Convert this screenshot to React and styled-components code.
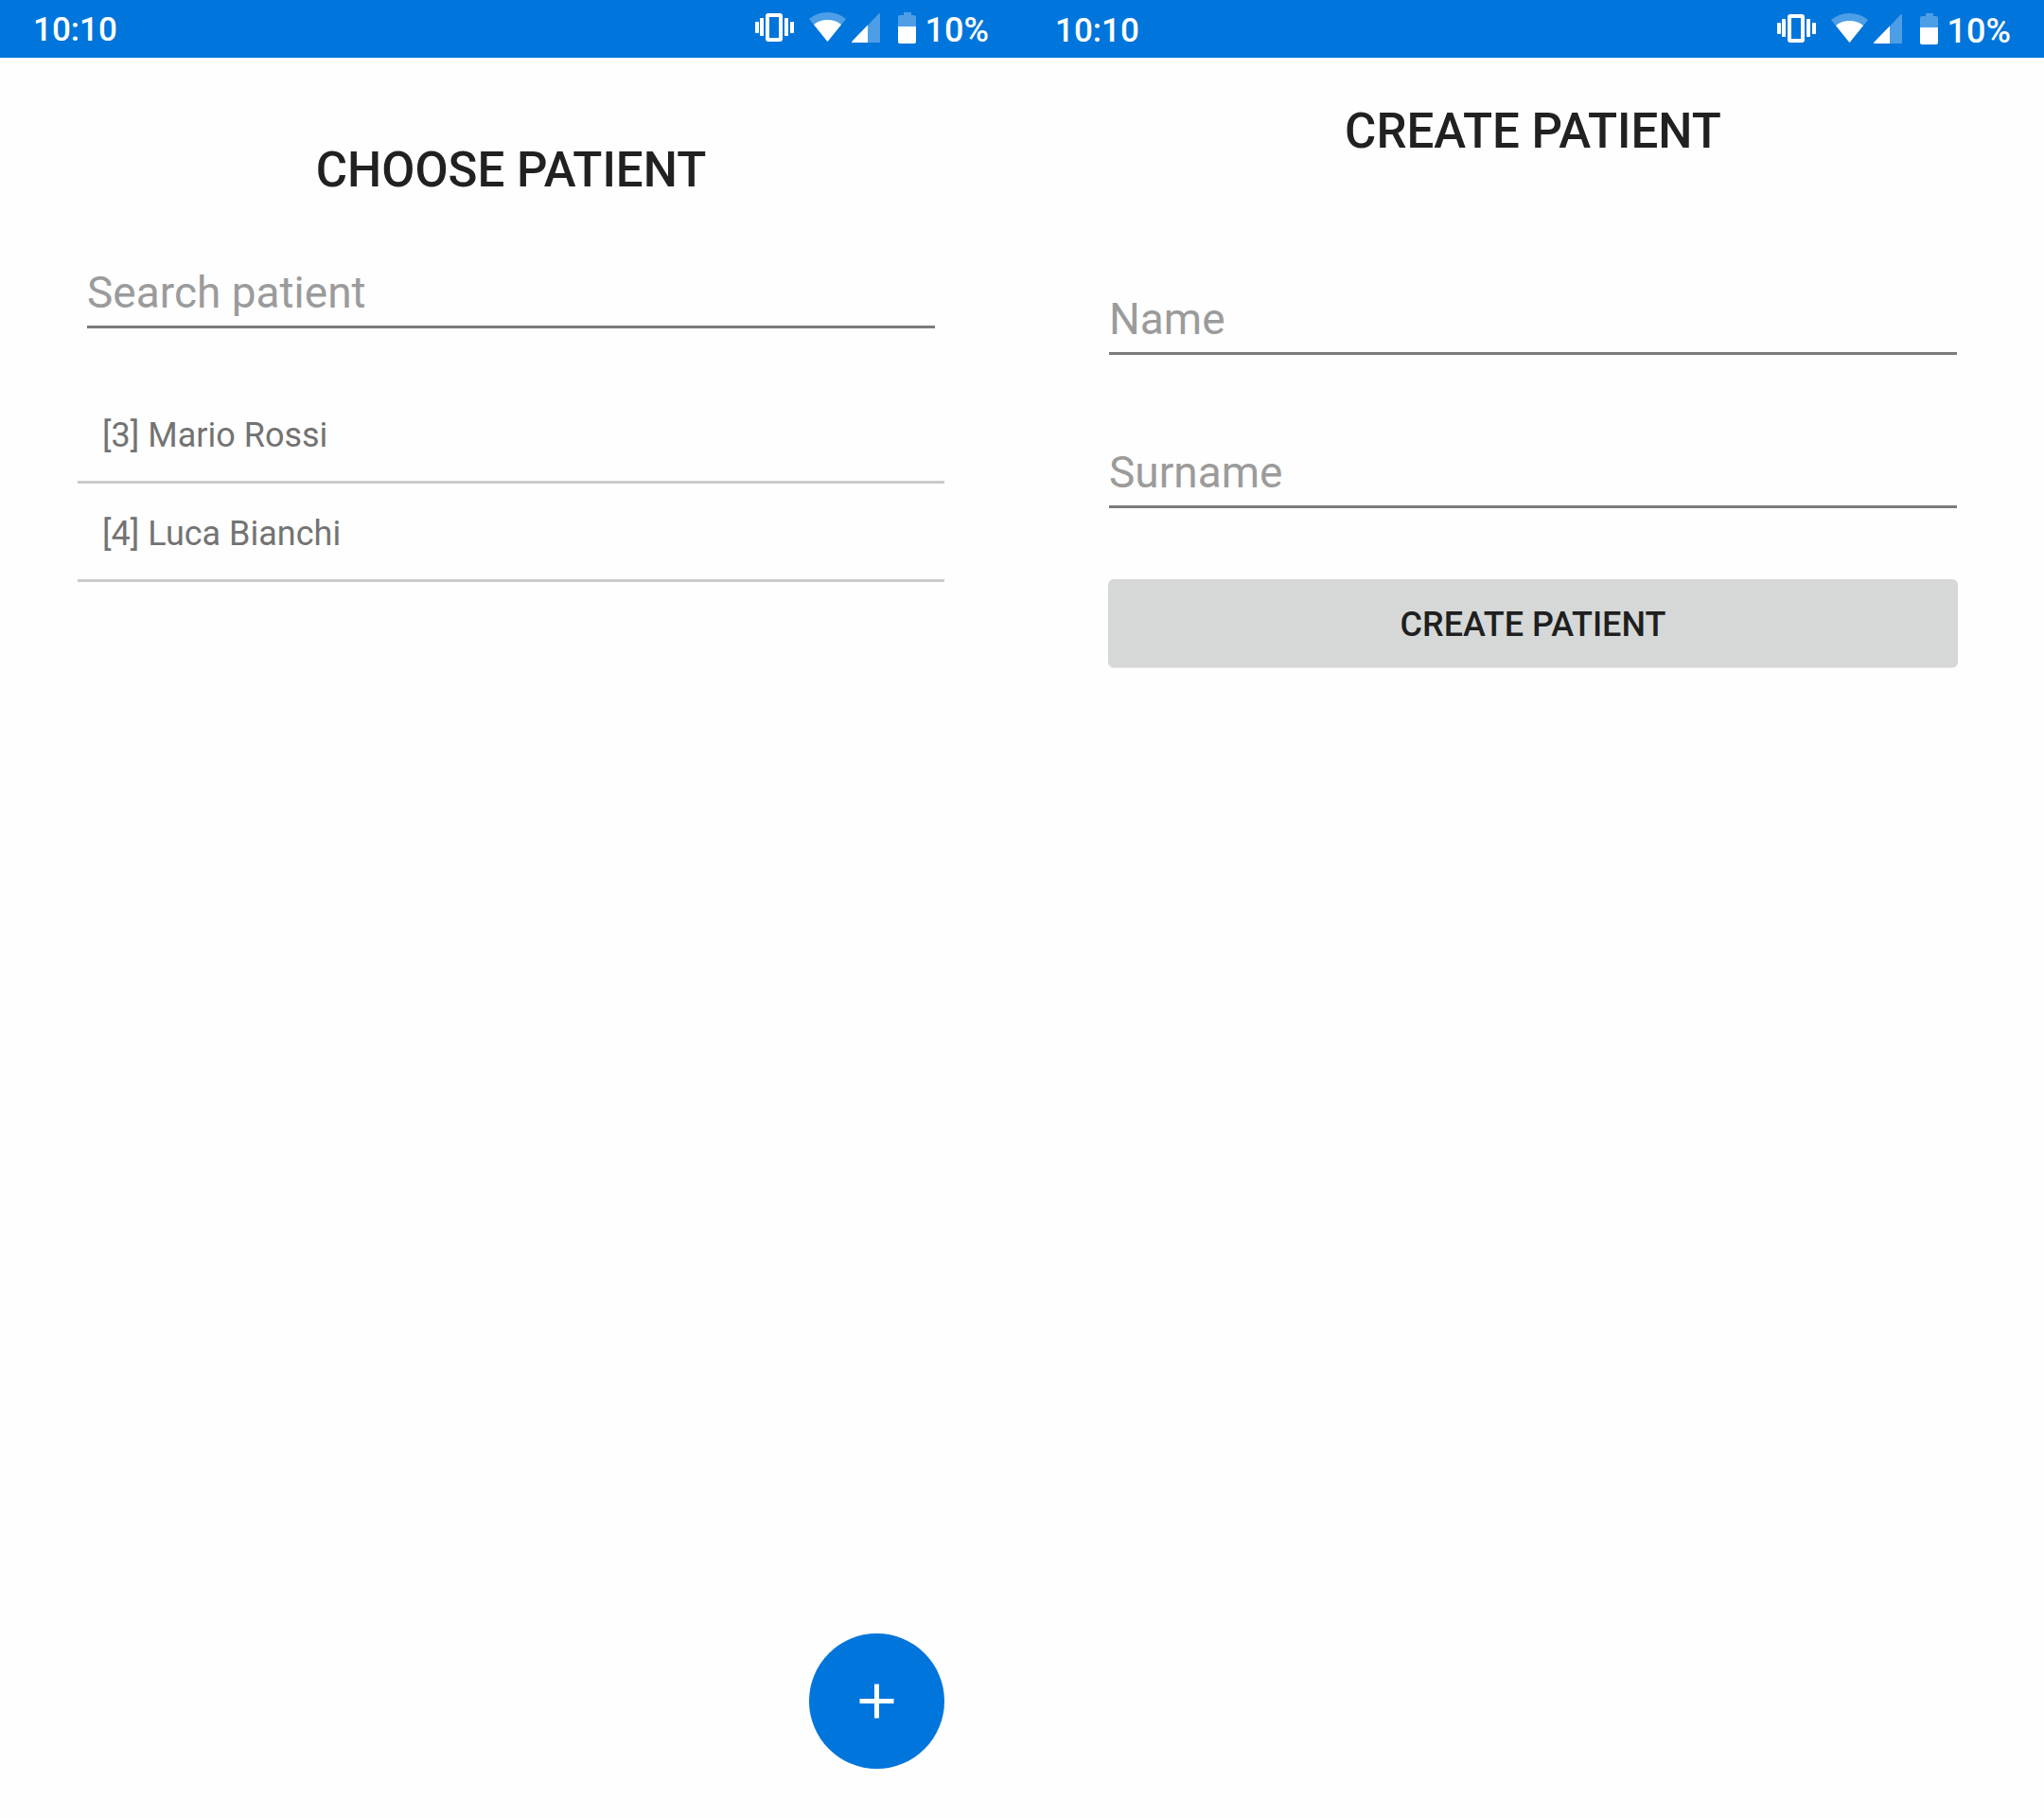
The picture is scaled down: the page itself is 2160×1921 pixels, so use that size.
import React from "react";
import styled, { createGlobalStyle } from "styled-components";

const blue = "#0075db";

const GlobalStyle = createGlobalStyle`
  *, *::before, *::after { box-sizing: border-box; }
  body {
    margin: 0;
    background: #fefefe;
    font-family: Roboto, "Noto Sans", sans-serif;
    color: #212121;
  }
`;

const Screens = styled.div`
  display: grid;
  grid-template-columns: 1fr 1fr;
  min-height: 100vh;
`;

const Screen = styled.section`
  display: flex;
  flex-direction: column;
`;

const StatusBar = styled.header`
  display: flex;
  align-items: center;
  justify-content: space-between;
  height: 61px;
  padding: 0 35px ${(p) => p.$bottom}px;
  background: ${blue};
  color: #ffffff;
  line-height: 42px;
  font-weight: 500;
`;

const Clock = styled.time`
  padding-top: 4px;
  font-size: 35px;
`;

const Charge = styled.span`
  padding-top: 4px;
  font-size: 36px;
`;

const Indicators = styled.div`
  display: flex;
  align-items: center;
`;

const Icon = styled.svg`
  display: block;
  flex: none;
  margin-right: ${(p) => p.$gap}px;
  fill: #ffffff;
`;

const Content = styled.main`
  flex: 1;
  display: flex;
  flex-direction: column;
  padding: ${(p) => p.$top}px 82px 52px;
`;

const Title = styled.h1`
  margin: 0;
  font-size: 51px;
  line-height: 60px;
  font-weight: 500;
  text-align: center;
  text-transform: uppercase;
`;

const TextField = styled.input`
  display: block;
  margin: 0 10px;
  padding: 0 0 8px;
  border: 0;
  border-bottom: 3px solid #7b7b7b;
  border-radius: 0;
  outline: 0;
  appearance: none;
  background: transparent;
  color: #212121;
  font-family: inherit;
  font-size: 46px;
  line-height: 54px;
  height: 65px;

  &::placeholder {
    color: #9b9b9b;
    opacity: 1;
  }
`;

const Search = styled.form`
  display: flex;
  flex-direction: column;
  padding: 72px 0 60px;
`;

const PatientList = styled.ul`
  list-style: none;
  margin: 0;
  padding: 0;
`;

const Patient = styled.li`
  padding: 32px 26px 27px;
  border-bottom: 3px solid #cbcbcb;
  color: #737373;
  font-size: 36px;
  line-height: 42px;
`;

const AddButton = styled.button`
  display: flex;
  align-items: center;
  justify-content: center;
  align-self: flex-end;
  width: 143px;
  height: 143px;
  margin-top: auto;
  padding: 0;
  border: 0;
  border-radius: 50%;
  background: ${blue};
  cursor: pointer;
`;

const PatientForm = styled.form`
  display: flex;
  flex-direction: column;
  gap: 97px;
  padding-top: 141px;
`;

const Actions = styled.div`
  display: flex;
  margin-top: -22px;
  padding: 0 9px;
`;

const SubmitButton = styled.button`
  flex: 1;
  height: 93px;
  padding: 2px 0 0;
  border: 0;
  border-radius: 6px;
  background: #d6d8d7;
  box-shadow: 0 1px 1px #e4e5e5;
  color: #1f1f1f;
  font-family: inherit;
  font-size: 36px;
  line-height: 42px;
  font-weight: 500;
  text-transform: uppercase;
  cursor: pointer;
`;

function Status({ bottom = 0 }) {
  return (
    <StatusBar $bottom={bottom}>
      <Clock>10:10</Clock>
      <Indicators>
        <Icon $gap={16} width="41" height="31" viewBox="0 0 41 31" aria-hidden="true">
          <rect x="0" y="9" width="4" height="12" rx="0.8" />
          <rect x="5" y="5" width="4" height="19" rx="0.8" />
          <path fillRule="evenodd" d="M14 0H26Q29 0 29 3V27Q29 30 26 30H14Q11 30 11 27V3Q11 0 14 0ZM15 4V26H25V4Z" />
          <rect x="31" y="5" width="4" height="19" rx="0.8" />
          <rect x="37" y="9" width="4" height="12" rx="0.8" />
        </Icon>
        <Icon $gap={6} width="39" height="33" viewBox="0 0 39 33" aria-hidden="true">
          <path opacity="0.3" d="M19.500 31L0 7Q8.500 0 19.500 0T39 7Z" />
          <path d="M19.500 31L5 13Q11 8 19.500 8T34 13Z" />
        </Icon>
        <Icon $gap={19} width="30" height="31" viewBox="0 0 30 31" aria-hidden="true">
          <path opacity="0.3" d="M0 31L28 1Q30 -1 30 1V31Z" />
          <path d="M17 12.500V31H1Q-0.500 31 0.500 29.500Z" />
        </Icon>
        <Icon $gap={10} width="19" height="33" viewBox="0 0 19 33" aria-hidden="true">
          <path opacity="0.3" d="M6 0H14V3H17Q19 3 19 5V15H0V5Q0 3 2 3H6Z" />
          <path d="M0 15H19V31Q19 33 17 33H2Q0 33 0 31Z" />
        </Icon>
        <Charge>10%</Charge>
      </Indicators>
    </StatusBar>
  );
}

const patients = [
  { id: 3, name: "Mario Rossi" },
  { id: 4, name: "Luca Bianchi" },
];

export default function App() {
  const stay = (event) => event.preventDefault();
  return (
    <>
      <GlobalStyle />
      <Screens>
        <Screen>
          <Status bottom={2} />
          <Content $top={89}>
            <Title>Choose patient</Title>
            <Search onSubmit={stay}>
              <TextField type="text" placeholder="Search patient" aria-label="Search patient" />
            </Search>
            <PatientList>
              {patients.map((patient) => (
                <Patient key={patient.id}>
                  [{patient.id}] {patient.name}
                </Patient>
              ))}
            </PatientList>
            <AddButton type="button" aria-label="Add patient">
              <svg width="37" height="37" viewBox="0 0 37 37" aria-hidden="true">
                <path d="M18.500 0.500V36.500M0.500 18.500H36.500" stroke="#ffffff" strokeWidth="5" />
              </svg>
            </AddButton>
          </Content>
        </Screen>
        <Screen>
          <Status />
          <Content $top={48}>
            <Title>Create patient</Title>
            <PatientForm onSubmit={stay}>
              <TextField type="text" placeholder="Name" aria-label="Name" />
              <TextField type="text" placeholder="Surname" aria-label="Surname" />
              <Actions>
                <SubmitButton type="submit">Create patient</SubmitButton>
              </Actions>
            </PatientForm>
          </Content>
        </Screen>
      </Screens>
    </>
  );
}
